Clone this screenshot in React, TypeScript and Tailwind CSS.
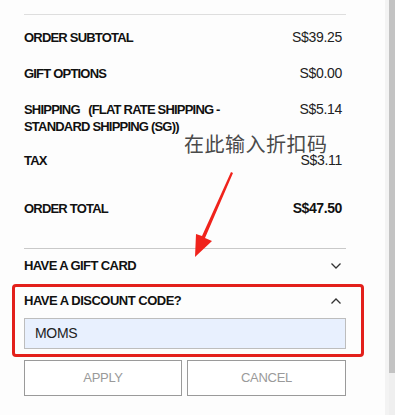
import React from "react";

function Row({ label, value, bold, className }: { label: React.ReactNode; value: string; bold?: boolean; className?: string }) {
  return (
    <div className={"flex justify-between items-start " + (className ?? "")}>
      <div className="text-[13px] leading-[17px] font-bold text-[#111] tracking-[-0.8px]">{label}</div>
      <div className={"text-[14px] leading-[17px] pr-[4px] " + (bold ? "font-bold text-[#111] tracking-[-0.4px]" : "text-[#222] tracking-[-0.3px]")}>{value}</div>
    </div>
  );
}

function Chevron({ up }: { up?: boolean }) {
  return (
    <svg width="12" height="8" viewBox="0 0 12 8" className="mr-[4px]">
      <path d={up ? "M1.5 6.5 L6 2 L10.5 6.5" : "M1.5 1.5 L6 6 L10.5 1.5"} fill="none" stroke="#333" strokeWidth="1.3" />
    </svg>
  );
}

export default function App() {
  return (
    <div className="w-[395px] h-[415px] flex bg-white overflow-hidden relative" style={{ fontFamily: '"Liberation Sans", Arial, sans-serif' }}>
      <div className="w-[385px] pl-[24px] pr-[39px] flex flex-col bg-[#fdfdfd]">
        <div className="mt-[14px] border-t border-[#dedede]" />
        <Row className="mt-[14px]" label="ORDER SUBTOTAL" value="S$39.25" />
        <Row className="mt-[19px]" label="GIFT OPTIONS" value="S$0.00" />
        <Row
          className="mt-[19px]"
          label={
            <>
              SHIPPING&nbsp;&nbsp;&nbsp;(FLAT RATE SHIPPING -<br />STANDARD SHIPPING (SG))
            </>
          }
          value="S$5.14"
        />
        <Row className="mt-[17px]" label="TAX" value="S$3.11" />
        <Row className="mt-[31px]" label="ORDER TOTAL" value="S$47.50" bold />
        <div className="mt-[31px] border-t border-[#c9c9c9]" />
        <div className="mt-[8px] flex justify-between items-center h-[17px]">
          <div className="text-[13px] leading-[17px] font-bold text-[#111] tracking-[-0.6px]">HAVE A GIFT CARD</div>
          <Chevron />
        </div>
        <div className="mt-[18px] flex justify-between items-center h-[17px]">
          <div className="text-[13px] leading-[17px] font-bold text-[#111] tracking-[-0.5px]">HAVE A DISCOUNT CODE?</div>
          <Chevron up />
        </div>
        <div className="mt-[9px] h-[31px] bg-[#e8f0fe] border border-[#bdbdbd] flex items-center pl-[10px] text-[14px] text-[#222] tracking-[-0.3px]">
          MOMS
        </div>
        <div className="mt-[11px] flex gap-[5px]">
          <button className="w-[158px] h-[36px] border border-[#9a9a9a] text-[13px] text-[#9a9a9a] tracking-[-0.3px] bg-white">APPLY</button>
          <button className="flex-1 h-[36px] border border-[#9a9a9a] text-[13px] text-[#9a9a9a] tracking-[-0.3px] bg-white">CANCEL</button>
        </div>
      </div>
      <div className="w-[10px] flex">
        <div className="w-[4px] bg-[#f3f3f3]" />
        <div className="w-[6px] flex flex-col">
          <div className="h-[373px] bg-[#c3c3c3]" />
          <div className="flex-1 bg-[#efefef]" />
        </div>
      </div>

      {/* annotation overlays */}
      <div className="absolute left-[12px] top-[284px] w-[352px] h-[73px] border-[3px] border-[#e3201b] rounded-[4px]" />
      <div
        className="absolute left-[184px] top-[131px] text-[20px] leading-[26px] text-[#4a4a4a] tracking-[0.5px]"
        style={{ fontFamily: '"Noto Sans CJK SC", sans-serif' }}
      >
        在此输入折扣码
      </div>
      <svg className="absolute left-0 top-0" width="395" height="415" viewBox="0 0 395 415">
        <polygon points="231,172 233,173 205,238 212,241 195,257 196,234 202,236" fill="#f0231c" />
      </svg>
    </div>
  );
}
